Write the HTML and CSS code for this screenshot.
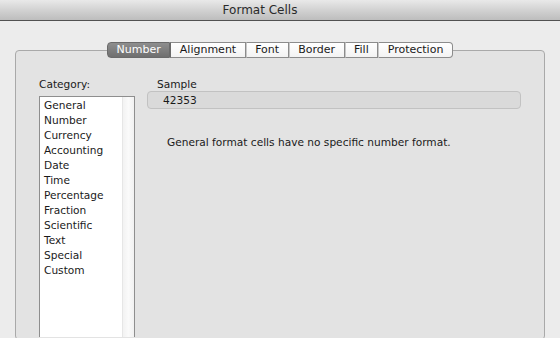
FILE: index.html
```html
<!DOCTYPE html>
<html lang="en">

<head>
    <meta charset="UTF-8">
    <meta name="viewport" content="width=device-width, initial-scale=1.0">
    <title>Format Cells</title>
    <link rel="stylesheet" href="styles.css">
</head>

<body>
    <div class="titlebar">Format Cells</div>

    <div class="dialog">
        <div class="tabs">
            <div class="tab active">Number</div>
            <div class="tab">Alignment</div>
            <div class="tab">Font</div>
            <div class="tab">Border</div>
            <div class="tab">Fill</div>
            <div class="tab">Protection</div>
        </div>

        <div class="panel">
            <div class="left">
                <div class="label">Category:</div>
                <div class="list">
                    <ul class="items">
                        <li>General</li>
                        <li>Number</li>
                        <li>Currency</li>
                        <li>Accounting</li>
                        <li>Date</li>
                        <li>Time</li>
                        <li>Percentage</li>
                        <li>Fraction</li>
                        <li>Scientific</li>
                        <li>Text</li>
                        <li>Special</li>
                        <li>Custom</li>
                    </ul>
                    <div class="track"></div>
                </div>
            </div>

            <div class="right">
                <div class="label sample_label">Sample</div>
                <div class="sample">42353</div>
                <p class="desc">General format cells have no specific number format.</p>
            </div>
        </div>
    </div>
</body>

</html>
```

FILE: styles.css
```css
* {
    margin: 0;
    padding: 0;
}

body {
    height: 338px;
    background-color: #ececec;
    font-family: "DejaVu Sans", "Liberation Sans", sans-serif;
    font-size: 10.6px;
    color: #1a1a1a;
    overflow: hidden;
}

.titlebar {
    height: 20px;
    line-height: 20px;
    padding-right: 40px;
    text-align: center;
    font-size: 12px;
    color: #2a2a2a;
    border-bottom: 1px solid #515151;
    background: linear-gradient(#e9e9e9, #d2d2d2 50%, #bdbdbd);
}

.dialog {
    padding: 21px 15px 0;
}

.tabs {
    position: relative;
    z-index: 1;
    display: flex;
    justify-content: center;
    margin-bottom: -8px;
}

.tab {
    height: 14px;
    line-height: 14px;
    padding: 0 8.5px;
    font-size: 11px;
    background: linear-gradient(#ffffff, #f3f3f3);
    border: 1px solid #8c8c8c;
    border-left: 1px solid #c8c8c8;
}

.tab:first-child {
    border-left: 1px solid #8c8c8c;
    border-radius: 4px 0 0 4px;
}

.tab:last-child {
    border-radius: 0 4px 4px 0;
}

.tab.active {
    color: #fff;
    border-color: #6a6a6a;
    background: linear-gradient(#8e8e8e, #6f6f6f);
}

.tab.active + .tab {
    border-left-color: #6a6a6a;
}

.panel {
    box-sizing: border-box;
    display: flex;
    gap: 12px;
    height: 290px;
    padding: 26px 23px 0;
    background-color: #e3e3e3;
    border: 1px solid #a9a9a9;
    border-radius: 4px;
}

.label {
    height: 14px;
    line-height: 14px;
    margin-bottom: 5px;
}

.list {
    display: flex;
    width: 94px;
    height: 240px;
    background-color: #fff;
    border: 1px solid #8e8e8e;
    border-bottom: 0;
}

.items {
    flex: 1;
    list-style: none;
    padding: 1px 0 0 4px;
}

.items li {
    height: 15px;
    line-height: 15px;
}

.track {
    width: 11px;
    border-left: 1px solid #e6e6e6;
    background: linear-gradient(to right, #f2f2f2, #fafafa 50%, #f1f1f1);
}

.right {
    flex: 1;
}

.sample_label {
    padding-left: 10px;
    margin-bottom: 0;
}

.sample {
    height: 16px;
    line-height: 16px;
    padding-left: 15px;
    background-color: #dadada;
    border: 1px solid #c2c2c2;
    border-radius: 4px;
}

.desc {
    margin-top: 26px;
    padding-left: 20px;
    line-height: 14px;
}
```
